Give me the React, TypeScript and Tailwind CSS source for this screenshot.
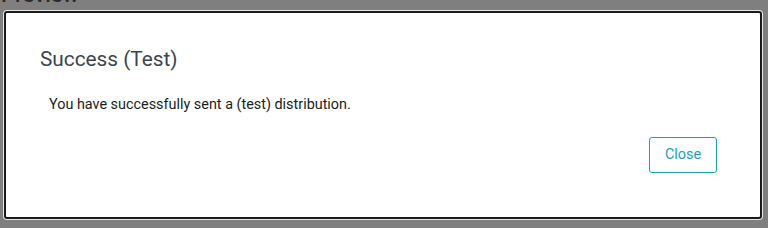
export default function App() {
  return (
    <div className="h-[228px] w-[768px] overflow-hidden bg-[#7f7f7f] font-['Roboto',sans-serif]">
      <div className="h-[11px] overflow-hidden">
        <p className="-mt-[16px] pl-[1px] text-[22px] leading-[22px] font-medium text-[#2b2b2b]">Preview</p>
      </div>
      <div className="ml-[4px] flex h-[208px] w-[758px] flex-col rounded-[3px] border-2 border-[#1b1b1b] bg-white shadow-[0_0_0_1px_#e8e8e8]">
        <h2 className="pl-[34px] pt-[31px] text-[20.8px] leading-[30px] text-[#3b4650]">Success (Test)</h2>
        <p className="mt-[21px] px-[43px] text-[14.4px] leading-[20px] text-[#1a1d20]">
          You have successfully sent a (test) distribution.
        </p>
        <div className="mt-[22px] flex justify-end px-[43px]">
          <button className="flex h-[36px] w-[68px] items-center justify-center rounded-[3px] border border-[#17a2b8] text-[14.4px] text-[#17a2b8]">
            Close
          </button>
        </div>
      </div>
    </div>
  );
}
